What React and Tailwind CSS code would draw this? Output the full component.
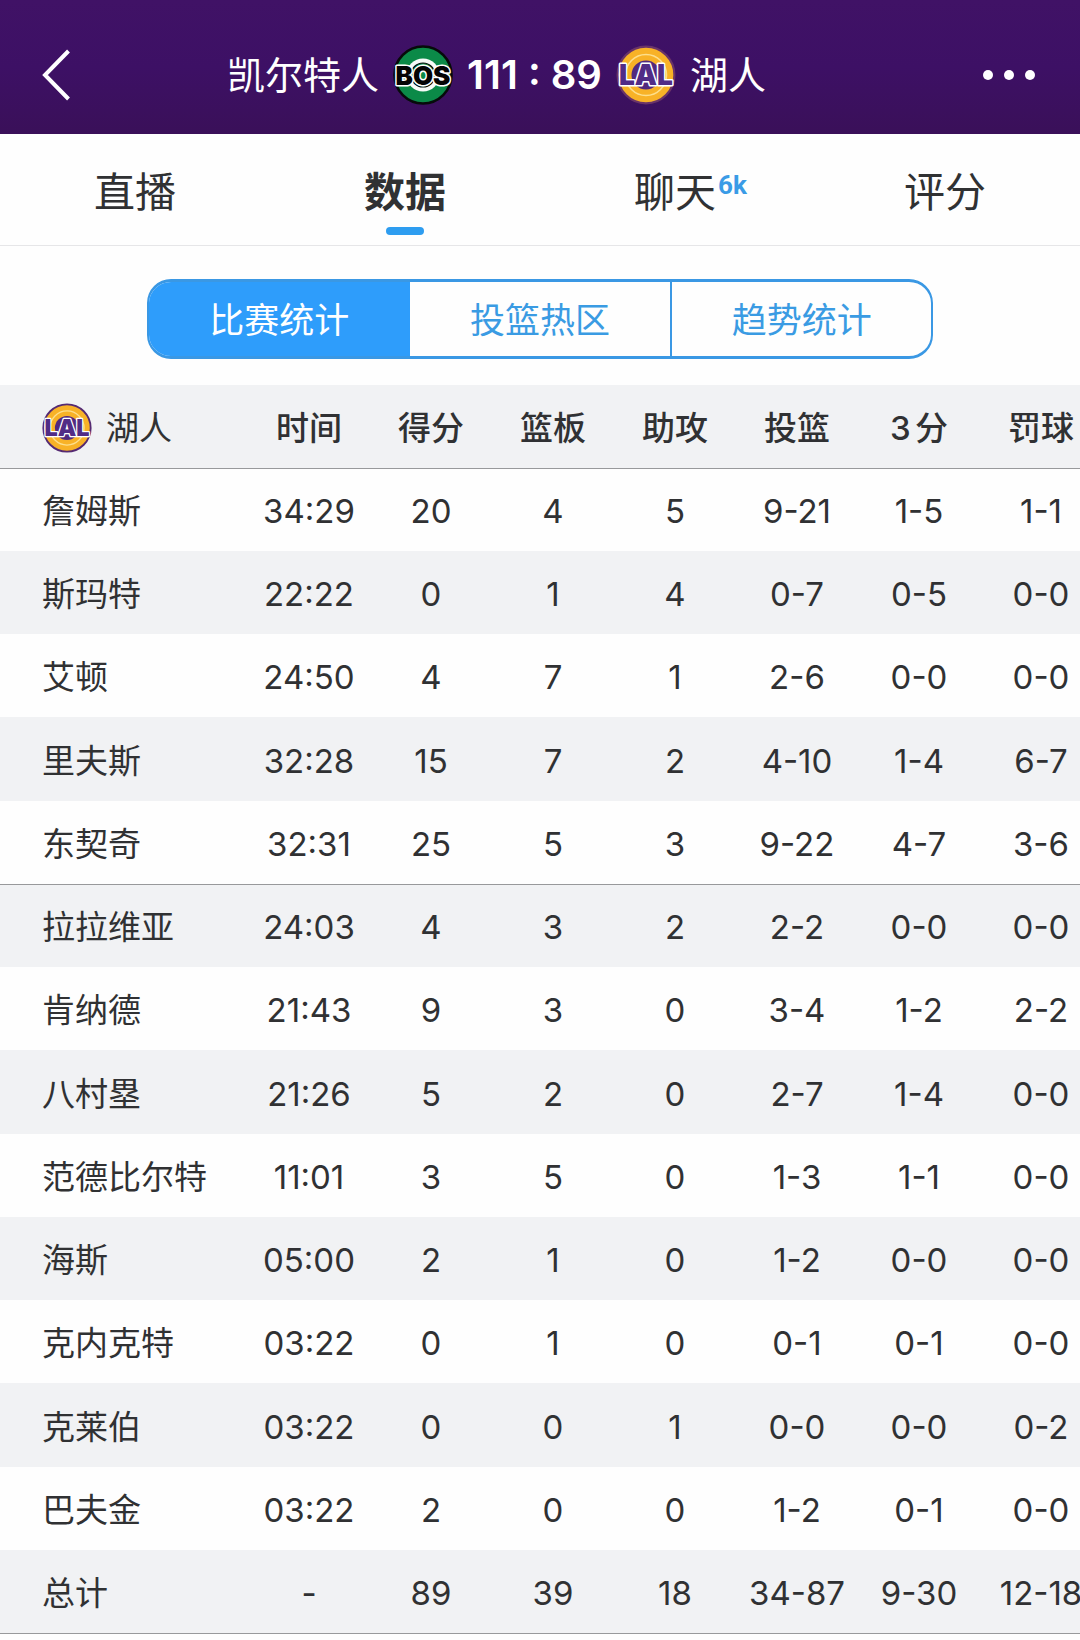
import { useState } from 'react';

const TABS = [
  { id: 'live', label: '直播' },
  { id: 'stats', label: '数据' },
  { id: 'chat', label: '聊天', badge: '6k' },
  { id: 'rating', label: '评分' },
];

const VIEWS = ['比赛统计', '投篮热区', '趋势统计'];

const COLUMNS = ['时间', '得分', '篮板', '助攻', '投篮', '3分', '罚球'];

// The first five are the starters
const PLAYERS = [
  ['詹姆斯', '34:29', '20', '4', '5', '9-21', '1-5', '1-1'],
  ['斯玛特', '22:22', '0', '1', '4', '0-7', '0-5', '0-0'],
  ['艾顿', '24:50', '4', '7', '1', '2-6', '0-0', '0-0'],
  ['里夫斯', '32:28', '15', '7', '2', '4-10', '1-4', '6-7'],
  ['东契奇', '32:31', '25', '5', '3', '9-22', '4-7', '3-6'],
  ['拉拉维亚', '24:03', '4', '3', '2', '2-2', '0-0', '0-0'],
  ['肯纳德', '21:43', '9', '3', '0', '3-4', '1-2', '2-2'],
  ['八村塁', '21:26', '5', '2', '0', '2-7', '1-4', '0-0'],
  ['范德比尔特', '11:01', '3', '5', '0', '1-3', '1-1', '0-0'],
  ['海斯', '05:00', '2', '1', '0', '1-2', '0-0', '0-0'],
  ['克内克特', '03:22', '0', '1', '0', '0-1', '0-1', '0-0'],
  ['克莱伯', '03:22', '0', '0', '1', '0-0', '0-0', '0-2'],
  ['巴夫金', '03:22', '2', '0', '0', '1-2', '0-1', '0-0'],
];

const TOTAL = ['总计', '-', '89', '39', '18', '34-87', '9-30', '12-18'];

function CelticsLogo({ className }) {
  return (
    <svg viewBox="0 0 60 60" className={className} aria-hidden="true">
      <circle cx="30" cy="30" r="28.5" fill="#0b8a48" stroke="#060b0a" strokeWidth="2.6" />
      <circle cx="30" cy="30" r="16.5" fill="#f7fbf8" />
      <circle cx="30" cy="30" r="12" fill="#0b8a48" stroke="#060b0a" strokeWidth="1.2" />
      <text
        x="30"
        y="39.8"
        textAnchor="middle"
        fontFamily="Inter, sans-serif"
        fontWeight="900"
        fontSize="26"
        fill="#050505"
        stroke="#ffffff"
        strokeWidth="3"
        strokeLinejoin="round"
        paintOrder="stroke"
      >
        BOS
      </text>
    </svg>
  );
}

function LakersLogo({ className, ring = '#6a3468' }) {
  return (
    <svg viewBox="0 0 60 60" className={className} aria-hidden="true">
      <circle cx="30" cy="30" r="28.4" fill="#f8b227" stroke={ring} strokeWidth="2.2" />
      <circle cx="30" cy="30" r="20.5" fill="none" stroke="#fddf8c" strokeWidth="1.6" />
      <circle cx="30" cy="30" r="14.5" fill="#51297e" />
      <text
        x="30"
        y="40"
        textAnchor="middle"
        fontFamily="Inter, sans-serif"
        fontWeight="900"
        fontSize="28"
        fill="#512c86"
        stroke="#ffffff"
        strokeWidth="3"
        strokeLinejoin="round"
        paintOrder="stroke"
      >
        LAL
      </text>
    </svg>
  );
}

function StatRow({ row, shaded, divider }) {
  const [name, ...stats] = row;
  return (
    <tr className={`h-[83px] nth-[4n]:h-21 ${shaded ? 'bg-[#f1f2f4]' : 'bg-[#fefefe]'} ${divider ? 'border-b border-[#98999b]' : ''}`}>
      <th scope="row" className="pt-[3px] pl-[42px] text-left font-normal">{name}</th>
      {stats.map((value, i) => (
        <td key={i} className="pt-[3px] text-center">{value}</td>
      ))}
    </tr>
  );
}

export default function App() {
  const [tab, setTab] = useState('stats');
  const [view, setView] = useState(0);

  return (
    <div className="min-h-screen bg-[#fefefe] font-[Inter,'Noto_Sans_CJK_SC',sans-serif] text-[#303133]">
      <header className="flex h-[134px] items-center bg-linear-to-b from-[#401266] via-[#3d1065] to-[#3a1059] pt-4 pr-[45px] pl-[42px] text-white">
        <button type="button" aria-label="返回" className="flex w-[76px] items-center">
          <svg viewBox="0 0 28 52" className="h-[52px] w-7" fill="none" stroke="currentColor" strokeWidth="4">
            <path d="M26.5 2 3 26l23.5 24" />
          </svg>
        </button>
        <h1 className="flex flex-1 items-center justify-center gap-[14px] text-[38px] leading-none">
          <span>凯尔特人</span>
          <CelticsLogo className="size-[60px] overflow-visible" />
          <span className="text-[40px] font-semibold">111 : 89</span>
          <LakersLogo className="size-[60px] overflow-visible" />
          <span>湖人</span>
        </h1>
        <button type="button" aria-label="更多" className="flex w-[160px] items-center justify-end gap-[11px]">
          <span className="size-[10px] rounded-full bg-white" />
          <span className="size-[10px] rounded-full bg-white" />
          <span className="size-[10px] rounded-full bg-white" />
        </button>
      </header>

      <nav className="grid h-28 grid-cols-4 border-b border-[#e6e6e8]">
        {TABS.map((t) => (
          <button
            key={t.id}
            type="button"
            onClick={() => setTab(t.id)}
            className={`flex flex-col items-center pt-7 text-[41px] leading-[60px] ${tab === t.id ? 'font-bold' : ''}`}
          >
            <span className="relative">
              {t.label}
              {t.badge && (
                <span className="absolute top-1 left-full ml-0.5 font-[Roboto,sans-serif] text-[26px] leading-[38px] font-bold text-[#3a9be6]">{t.badge}</span>
              )}
            </span>
            {tab === t.id && <span className="mt-[5px] h-2 w-[38px] rounded-full bg-[#2e9df0]" />}
          </button>
        ))}
      </nav>

      <div className="mx-[147px] mt-[33px] mb-[26px] grid h-20 grid-cols-3 overflow-hidden rounded-[24px] border-x-2 border-y-[3px] border-[#3a98e4] text-[35px]">
        {VIEWS.map((label, i) => (
          <button
            key={label}
            type="button"
            onClick={() => setView(i)}
            className={`border-[#3a98e4] pt-0.5 last:border-l-2 ${view === i ? 'bg-[#2e9dfb] text-white' : 'text-[#3a9be3]'}`}
          >
            {label}
          </button>
        ))}
      </div>

      <div className="overflow-x-auto [scrollbar-width:none]">
        <table className="w-full min-w-[1102px] table-fixed border-collapse text-[33px] leading-10 whitespace-nowrap">
          <thead>
            <tr className="h-[83px] border-b border-[#98999b] bg-[#f1f2f4]">
              <th scope="col" className="pt-[3px] pl-[42px] font-normal">
                <span className="flex items-center gap-[14px]">
                  <LakersLogo className="size-[50px] overflow-visible" ring="#552a72" />
                  湖人
                </span>
              </th>
              {COLUMNS.map((col) => (
                <th key={col} scope="col" className="w-[122px] pt-[3px] text-center font-medium [text-autospace:normal]">{col}</th>
              ))}
            </tr>
          </thead>
          <tbody>
            {PLAYERS.map((p, i) => (
              <StatRow key={p[0]} row={p} shaded={i % 2 === 1} divider={i === 4} />
            ))}
          </tbody>
          <tfoot>
            <StatRow row={TOTAL} shaded divider />
          </tfoot>
        </table>
      </div>
    </div>
  );
}
